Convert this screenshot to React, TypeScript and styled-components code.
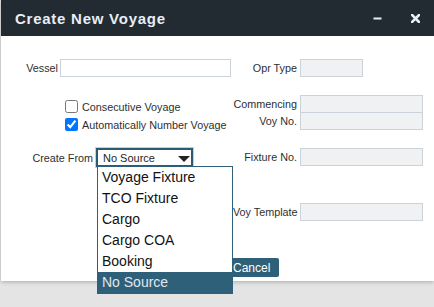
import styled, { createGlobalStyle } from 'styled-components';

const GlobalStyle = createGlobalStyle`
  html, body, #root {
    height: 100%;
  }
  html {
    background: #e4e4e4;
  }
  body {
    margin: 0;
    padding: 0;
    font-family: "Liberation Sans", Arial, sans-serif;
  }
`;

const Dialog = styled.div`
  position: relative;
  margin-left: 1px;
  width: 433px;
  height: 281px;
  background: #ffffff;
  box-shadow: 0 1px 4px rgba(0, 0, 0, 0.25);
  display: flex;
  flex-direction: column;
`;

const Header = styled.div`
  height: 36px;
  flex: none;
  background: #222a32;
  display: flex;
  align-items: center;
  padding-left: 14px;
  padding-right: 14px;
`;

const Title = styled.h1`
  flex: 1;
  margin: 0;
  font-size: 15px;
  font-weight: 700;
  letter-spacing: 0.75px;
  color: #e8eef6;
`;

const HeaderButton = styled.button<{ $gap?: number }>`
  border: none;
  background: transparent;
  padding: 0;
  width: 9px;
  height: 9px;
  display: flex;
  align-items: center;
  justify-content: center;
  margin-left: ${(p) => p.$gap ?? 0}px;
`;

const Body = styled.div`
  padding-top: 23px;
  display: flex;
  flex-direction: column;
`;

const Row = styled.div<{ $mt?: number }>`
  display: flex;
  align-items: flex-start;
  margin-top: ${(p) => p.$mt ?? 0}px;
`;

const Left = styled.div<{ $pl?: number }>`
  width: 232px;
  flex: none;
  display: flex;
  align-items: center;
  padding-left: ${(p) => p.$pl ?? 0}px;
  box-sizing: border-box;
`;

const Right = styled.div`
  display: flex;
  flex-direction: column;
`;

const Pair = styled.div<{ $overlap?: boolean }>`
  display: flex;
  align-items: center;
  margin-top: ${(p) => (p.$overlap ? -1 : 0)}px;
`;

const Label = styled.label<{ $w: number }>`
  width: ${(p) => p.$w}px;
  flex: none;
  text-align: right;
  font-size: 10.8px;
  color: #2f2f2f;
  white-space: nowrap;
`;

const Input = styled.input<{ $w: number; $readOnly?: boolean }>`
  width: ${(p) => p.$w}px;
  height: 18px;
  box-sizing: border-box;
  margin: 0 0 0 ${(p) => (p.$readOnly ? 3 : 2)}px;
  padding: 0 4px;
  border: 1px solid #ccd2d9;
  background: ${(p) => (p.$readOnly ? '#eff1f3' : '#ffffff')};
  font-family: inherit;
  font-size: 11px;
  outline: none;
`;

const Checks = styled.div`
  padding-top: 5px;
  display: flex;
  flex-direction: column;
  gap: 5px;
`;

const CheckLabel = styled.label`
  display: flex;
  align-items: center;
  gap: 4px;
  font-size: 10.8px;
  color: #2f2f2f;
  white-space: nowrap;

  input {
    width: 13px;
    height: 13px;
    margin: 0;
  }
`;

const SelectWrap = styled.div`
  position: relative;
  margin-left: 3px;
  z-index: 5;
`;

const SelectBox = styled.div`
  width: 97px;
  height: 19px;
  box-sizing: border-box;
  border: 2px solid #2b5a73;
  box-shadow: 0 0 0 1px #c5d0d8;
  display: flex;
  align-items: center;
  padding-left: 5px;
  padding-right: 1px;
  font-size: 11px;
  color: #1e1e1e;
  background: #fff;

  svg {
    margin-top: 3px;
  }
`;

const SelectText = styled.span`
  flex: 1;
`;

const List = styled.ul`
  position: absolute;
  left: 1px;
  top: 18px;
  width: 136px;
  margin: 0;
  padding: 0;
  list-style: none;
  background: #ffffff;
  border: 1px solid #2e6079;
  box-sizing: border-box;
`;

const Option = styled.li<{ $active?: boolean }>`
  height: 21px;
  line-height: 20px;
  padding-left: 4px;
  font-size: 14px;
  color: ${(p) => (p.$active ? '#e1e8ed' : '#111')};
  background: ${(p) => (p.$active ? '#2e6079' : 'transparent')};
`;

const Buttons = styled.div`
  display: flex;
  gap: 6px;
  margin-top: 37px;
  padding-left: 177px;
`;

const Button = styled.button`
  height: 19px;
  min-width: 40px;
  padding: 0 9px;
  border: none;
  border-radius: 2px;
  background: #2e6079;
  color: #ffffff;
  font-family: inherit;
  font-size: 12px;
`;

const options = ['Voyage Fixture', 'TCO Fixture', 'Cargo', 'Cargo COA', 'Booking', 'No Source'];

export default function App() {
  return (
    <>
      <GlobalStyle />
      <Dialog>
        <Header>
          <Title>Create New Voyage</Title>
          <HeaderButton aria-label="minimize">
            <svg width="9" height="9" viewBox="0 0 9 9">
              <rect x="0.5" y="3.5" width="8" height="2" fill="#e8eef6" />
            </svg>
          </HeaderButton>
          <HeaderButton aria-label="close" $gap={29}>
            <svg width="9" height="9" viewBox="0 0 9 9">
              <path d="M1 1 L8 8 M8 1 L1 8" stroke="#e8eef6" strokeWidth="2.6" strokeLinecap="square" />
            </svg>
          </HeaderButton>
        </Header>
        <Body>
          <Row>
            <Left>
              <Label $w={57}>Vessel</Label>
              <Input $w={171} />
            </Left>
            <Pair>
              <Label $w={64}>Opr Type</Label>
              <Input $w={63} $readOnly readOnly />
            </Pair>
          </Row>

          <Row $mt={18}>
            <Left $pl={64}>
              <Checks>
                <CheckLabel>
                  <input type="checkbox" />
                  Consecutive Voyage
                </CheckLabel>
                <CheckLabel>
                  <input type="checkbox" defaultChecked />
                  Automatically Number Voyage
                </CheckLabel>
              </Checks>
            </Left>
            <Right>
              <Pair>
                <Label $w={64}>Commencing</Label>
                <Input $w={123} $readOnly readOnly />
              </Pair>
              <Pair $overlap>
                <Label $w={64}>Voy No.</Label>
                <Input $w={123} $readOnly readOnly />
              </Pair>
            </Right>
          </Row>

          <Row $mt={17}>
            <Left>
              <Label $w={92}>Create From</Label>
              <SelectWrap>
                <SelectBox>
                  <SelectText>No Source</SelectText>
                  <svg width="12" height="6" viewBox="0 0 12 6">
                    <path d="M0 0 L12 0 L6 6 Z" fill="#222" />
                  </svg>
                </SelectBox>
                <List>
                  {options.map((o) => (
                    <Option key={o} $active={o === 'No Source'}>
                      {o}
                    </Option>
                  ))}
                </List>
              </SelectWrap>
            </Left>
            <Pair>
              <Label $w={64}>Fixture No.</Label>
              <Input $w={123} $readOnly readOnly />
            </Pair>
          </Row>

          <Row $mt={36}>
            <Left />
            <Pair>
              <Label $w={64}>Voy Template</Label>
              <Input $w={123} $readOnly readOnly />
            </Pair>
          </Row>

          <Buttons>
            <Button>OK</Button>
            <Button>Cancel</Button>
          </Buttons>
        </Body>
      </Dialog>
    </>
  );
}
